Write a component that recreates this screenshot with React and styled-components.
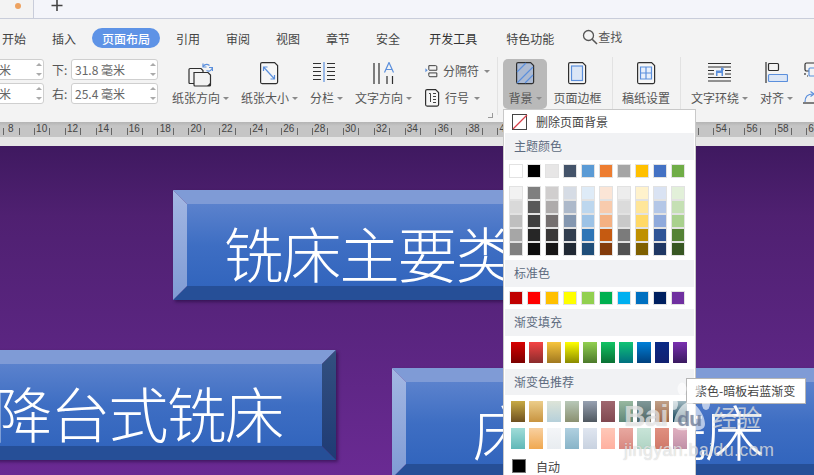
import React from 'react'
import styled, { createGlobalStyle } from 'styled-components'

const GlobalStyle = createGlobalStyle`
  html, body {
    margin: 0;
    padding: 0;
    overflow: hidden;
  }
  body {
    font-family: "Noto Sans CJK SC", "Liberation Sans", sans-serif;
  }
`

const Page = styled.div`
  position: relative;
  width: 814px;
  height: 475px;
  overflow: hidden;
  display: flex;
  flex-direction: column;
  background: #f3f3f3;
`

const TabStrip = styled.div`
  height: 18px;
  display: flex;
  flex: none;
  background: #f4f5fa;
  border-bottom: 1px solid #c9cdda;
`

const DocTab = styled.div`
  width: 34px;
  background: #f3f3f3;
  border-right: 1px solid #c9cdda;
  display: flex;
  justify-content: center;
  padding-left: 2px;
  box-sizing: border-box;
`

const Dot = styled.span`
  width: 6px;
  height: 6px;
  margin-top: 3px;
  border-radius: 50%;
  background: #eda260;
`

const AddTab = styled.div`
  width: 46px;
  display: flex;
  justify-content: center;
  color: #444;
`

const NavBar = styled.div`
  height: 20px;
  flex: none;
  margin: 9px 0 0 -8px;
  display: flex;
  gap: 6px;
  font-size: 12px;
  line-height: 20px;
  color: #444;
`

const NavItem = styled.div`
  height: 20px;
  box-sizing: border-box;
  padding: 1px 10px 0 ${p => (p.$wide ? 13 : 10)}px;
  border-radius: 10px;
  white-space: nowrap;
  color: ${p => (p.$active ? '#fff' : p.$dark ? '#333' : '#444')};
  background: ${p => (p.$active ? '#5e93e6' : 'transparent')};
  font-weight: ${p => (p.$active ? 500 : 400)};
`

const Search = styled.div`
  display: flex;
  align-items: center;
  margin-left: 12px;
  margin-top: -2px;
  color: #555;
`

const Ribbon = styled.div`
  height: 74px;
  flex: none;
  margin-left: -62px;
  position: relative;
  display: flex;
  align-items: flex-start;
`

const MarginColumn = styled.div`
  display: flex;
  flex-direction: column;
  gap: 3px;
  margin-top: 11px;
  margin-right: ${p => p.$gap}px;
`

const MarginRow = styled.div`
  display: flex;
  align-items: center;
  height: 21px;
  font-size: 12px;
  color: #555;
`

const MarginLabel = styled.span`
  width: 19px;
  white-space: nowrap;
`

const Spinner = styled.div`
  width: 87px;
  height: 21px;
  box-sizing: border-box;
  border: 1px solid #cfcfcf;
  border-radius: 3px;
  background: #fff;
  padding-left: 3px;
  display: flex;
  align-items: center;
  justify-content: space-between;
  font-size: 12px;
  color: #666;
  white-space: nowrap;
`

const Arrows = styled.span`
  display: flex;
  flex-direction: column;
  gap: 7px;
  margin-right: 1px;
`

const Arrow = styled.i`
  display: block;
  width: 0;
  height: 0;
  border-left: 3px solid transparent;
  border-right: 3px solid transparent;
  border-${p => (p.$down ? 'top' : 'bottom')}: 3px solid #aaa;
`

const BigButton = styled.div`
  width: ${p => p.$width}px;
  margin-right: ${p => p.$gap}px;
  margin-top: 11px;
  height: 50px;
  flex: none;
  border-radius: 5px;
  background: ${p => (p.$on ? '#b9b9b9' : 'transparent')};
  display: flex;
  flex-direction: column;
  align-items: center;
`

const IconSlot = styled.div`
  height: 30px;
  display: flex;
  align-items: flex-start;
  justify-content: center;
  padding-top: 3px;
  padding-right: ${p => p.$shift || 0}px;
  box-sizing: border-box;
  flex: none;
`

const ButtonLabel = styled.div`
  display: flex;
  align-items: center;
  gap: 3px;
  font-size: 12px;
  line-height: 18px;
  color: #555;
  white-space: nowrap;
`

const Caret = styled.i`
  width: 0;
  height: 0;
  margin-top: 1px;
  border-left: 3px solid transparent;
  border-right: 3px solid transparent;
  border-top: 3px solid #8a8a8a;
`

const SmallColumn = styled.div`
  width: ${p => p.$width}px;
  margin-top: 11px;
  flex: none;
  display: flex;
  flex-direction: column;
  gap: 5px;
`

const SmallButton = styled.div`
  height: 22px;
  display: flex;
  align-items: center;
  gap: 5px;
  padding-top: 1px;
  box-sizing: border-box;
  font-size: 12px;
  color: #555;
  white-space: nowrap;
`

const Divider = styled.div`
  width: 1px;
  height: 58px;
  flex: none;
  margin: 9px ${p => p.$after}px 0 ${p => p.$before || 0}px;
  background: #e2e2e2;
`

const CornerMark = styled.div`
  position: absolute;
  left: 550px;
  top: 65px;
  width: 4px;
  height: 4px;
  border-right: 1px solid #999;
  border-bottom: 1px solid #999;
`

const Ruler = styled.div`
  height: 15px;
  flex: none;
  padding-left: 3px;
  display: flex;
  overflow: hidden;
  background: linear-gradient(#b4b4b4 0, #c5c5c5 4px);
`

const RulerCell = styled.div`
  width: 30.9px;
  flex: none;
  height: 15px;
  font-family: "Liberation Sans", sans-serif;
  font-size: 10px;
  line-height: 15px;
  color: #444;
  background:
    linear-gradient(#666, #666) 0 6px / 1px 7px no-repeat,
    linear-gradient(#666, #666) 15.5px 6px / 1px 7px no-repeat;
`

const RulerNumber = styled.span`
  display: block;
  width: 15.5px;
  margin-top: -1px;
  text-align: center;
`

const Gutter = styled.div`
  height: 9px;
  flex: none;
  background: #e6e6e6;
`

const Stage = styled.div`
  flex: 1;
  position: relative;
  overflow: hidden;
  background: linear-gradient(#3f1960 0, #4f2071 70px, #5a2580 190px, #6a2a93 329px);
`

const SlideBox = styled.div`
  position: absolute;
  left: ${p => p.$x}px;
  top: ${p => p.$y}px;
  width: ${p => p.$w}px;
  height: 110px;
  box-sizing: border-box;
  border-style: solid;
  border-width: 14px;
  border-color: #7f9bd6 transparent #264f97 transparent;
  background: linear-gradient(#5b82cd 0, #3e6ec3 50%, #3265bd 100%) padding-box;
  box-shadow: 2px 2px 3px rgba(20, 0, 40, 0.45);
  display: flex;
  align-items: center;
  justify-content: center;
  padding: 14px 5px 0 0;
  color: #fff;
  font-size: 60px;
  font-weight: 300;
  letter-spacing: -2px;
  line-height: 60px;
  white-space: nowrap;

  &::before,
  &::after {
    content: '';
    position: absolute;
    top: -14px;
    bottom: -14px;
    width: 14px;
  }
  &::before {
    left: -14px;
    background: linear-gradient(#a3b7e3, #7f9bd4);
    clip-path: polygon(0 0, 100% 14px, 100% calc(100% - 14px), 0 100%);
  }
  &::after {
    right: -14px;
    background: linear-gradient(#33507f, #1f3b75);
    clip-path: polygon(100% 0, 0 14px, 0 calc(100% - 14px), 100% 100%);
  }
`

const Menu = styled.div`
  position: absolute;
  left: 503px;
  top: 109px;
  width: 193px;
  height: 380px;
  box-sizing: border-box;
  background: #fff;
  border: 1px solid #c9c9c9;
  display: flex;
  flex-direction: column;
  font-size: 12px;
  color: #444;
`

const ActionRow = styled.div`
  height: ${p => p.$h}px;
  flex: none;
  margin-top: ${p => p.$top || 0}px;
  display: flex;
  align-items: center;
  gap: ${p => p.$gap}px;
  padding-left: 8px;
`

const SectionTitle = styled.div`
  height: ${p => p.$h}px;
  flex: none;
  box-sizing: border-box;
  margin: ${p => p.$top}px 1px 0;
  padding: 0 0 2px 9px;
  background: #f1f2f4;
  display: flex;
  align-items: center;
  color: #5d6b80;
`

const SwatchRow = styled.div`
  display: flex;
  gap: 4px;
  flex: none;
  margin-top: ${p => p.$top}px;
  padding-left: ${p => p.$left}px;
`

const Swatch = styled.div`
  width: 14px;
  height: 14px;
  box-sizing: border-box;
  border: 1px solid #e2e2e2;
  background: ${p => p.$color};
`

const ShadeColumn = styled.div`
  display: flex;
  flex-direction: column;
`

const GradientSwatch = styled.div`
  width: 14px;
  height: 21px;
  background: linear-gradient(${p => p.$from}, ${p => p.$to});
`

const AutoSquare = styled.div`
  width: 14px;
  height: 14px;
  box-sizing: border-box;
  background: #000;
  border: 1px solid #777;
`

const Tooltip = styled.div`
  position: absolute;
  left: 686px;
  top: 378px;
  width: 120px;
  height: 26px;
  box-sizing: border-box;
  background: #fff;
  border: 1px solid #b5b5b5;
  padding-left: 8px;
  font-size: 12px;
  line-height: 24px;
  color: #444;
  white-space: nowrap;
`

const Watermark = styled.div`
  position: absolute;
  left: 624px;
  top: 382px;
  width: 150px;
  color: rgba(255, 255, 255, 0.62);
  font-family: "Liberation Sans", sans-serif;
  text-shadow: 0 0 1px rgba(120, 120, 120, 0.45);
  pointer-events: none;
`

const MarkTop = styled.div`
  display: flex;
  align-items: flex-end;
  height: 50px;
  font-size: 30px;
  line-height: 32px;
  font-weight: 700;
  letter-spacing: -1px;
`

const PawWrap = styled.div`
  position: relative;
  width: 43px;
  height: 50px;
  flex: none;
  display: flex;
  align-items: flex-end;
  justify-content: center;
  font-size: 21px;
  line-height: 26px;
  color: rgba(90, 110, 150, 0.55);
`

const PawShape = styled.svg`
  position: absolute;
  left: 0;
  top: 0;
`

const PawText = styled.span`
  position: relative;
`

const MarkCn = styled.span`
  font-family: "Noto Sans CJK SC", sans-serif;
  font-size: 24px;
  line-height: 30px;
  font-weight: 400;
  margin-left: 2px;
  letter-spacing: 0;
`

const MarkUrl = styled.div`
  margin-top: 8px;
  font-size: 18px;
  line-height: 20px;
  letter-spacing: 0.3px;
  white-space: nowrap;
`

const Dark = '#2f2f2f'
const Blue = '#5b8fdc'

const Icon = ({ w = 24, h = 24, children }) => (
  <svg width={w} height={h} viewBox={`0 0 ${w} ${h}`} fill="none" strokeWidth="1.2">
    {children}
  </svg>
)

const Doc = ({ x = 0.6, y = 0.6, w = 17, h = 21, fill = '#fff' }) => (
  <path
    d={`M${x + 1.5} ${y}H${x + w - 3}L${x + w} ${y + 3}V${y + h - 1.5}Q${x + w} ${y + h} ${x + w - 1.5} ${y + h}H${x + 1.5}Q${x} ${y + h} ${x} ${y + h - 1.5}V${y + 1.5}Q${x} ${y} ${x + 1.5} ${y}Z`}
    stroke={Dark}
    fill={fill}
  />
)

const OrientationIcon = () => (
  <Icon w={25} h={25}>
    <path d="M3 3.500H13L15 5.500V18.500H2Q1 18.500 1 17.500V4.500Q1 3.500 2 3.500Z" stroke={Dark} fill="#f3f3f3" transform="translate(0 3)" />
    <path d="M6 10.500H20L22.500 13V23Q22.500 24 21.500 24H7Q6 24 6 23Z" stroke={Dark} fill="#f3f3f3" />
    <path d="M22.500 20.500V24H19Z" fill={Dark} />
    <path d="M15 4.500Q18 0.800 21.500 3.500M24 6.500Q22 10.500 18.500 8.500" stroke={Blue} />
    <path d="M15 1.500V5H18.500M24.500 9V5.500H21" stroke={Blue} />
  </Icon>
)

const SizeIcon = () => (
  <Icon w={19} h={23}>
    <Doc fill="#f6f6f6" />
    <path d="M3.500 5L14.500 17M3.500 9V5H7.500M14.500 13V17H10.500" stroke={Blue} />
  </Icon>
)

const ColumnsIcon = () => (
  <Icon w={24} h={20}>
    <path d="M1 1.500H9M1 5.500H9M1 9.500H9M1 13.500H9M1 17.500H9M15 1.500H23M15 5.500H23M15 9.500H23M15 13.500H23M15 17.500H23" stroke={Dark} strokeWidth="1" />
    <path d="M12 0V20" stroke={Blue} />
  </Icon>
)

const TextDirIcon = () => (
  <Icon w={22} h={23}>
    <path d="M1 1V22M6 1V22M14 14V22M19.500 14V22" stroke={Dark} />
    <path d="M11.500 10.500L16 0.500L20.500 10.500M13 7.500H19" stroke={Blue} />
  </Icon>
)

const BreakIcon = () => (
  <Icon w={17} h={18}>
    <path d="M5 2H14Q15.500 2 15.500 3.500V8H5.500Q5 8 5 7ZM5 11.500H15.500V16.500H6.500Q5 16.500 5 15Z" stroke={Dark} />
    <path d="M0.500 5.500L3.500 8L0.500 10.500Z" fill={Blue} />
  </Icon>
)

const LineNumberIcon = () => (
  <Icon w={15} h={18}>
    <Doc w={13} h={16.5} fill="#f6f6f6" />
    <path d="M4 4.500H5.500V13M8 4.500H11M8 7.500H11M8 10.500H11M8 13.500H11" stroke={Dark} strokeWidth="0.9" />
  </Icon>
)

const BackgroundIcon = () => (
  <Icon w={19} h={23}>
    <Doc fill="#acbad2" />
    <path d="M1 10L10 1M1 21L17 5M9 21L17 13" stroke="#5b8fdc" strokeWidth="1.1" />
  </Icon>
)

const BorderIcon = () => (
  <Icon w={19} h={23}>
    <Doc fill="#f6f6f6" />
    <rect x="3.500" y="4" width="11" height="14.500" fill="#dbe6f6" stroke={Blue} />
  </Icon>
)

const GridPaperIcon = () => (
  <Icon w={19} h={23}>
    <Doc fill="#f6f6f6" />
    <path d="M3.500 5H14.500V17H3.500ZM3.500 11H14.500M9 5V17" stroke={Blue} fill="#e8effa" />
  </Icon>
)

const WrapIcon = () => (
  <Icon w={23} h={20}>
    <path d="M0 1.500H23M0 5H23M0 8.500H6M17 8.500H23M0 12H6M17 12H23M0 15.500H23M0 19H23" stroke={Dark} strokeWidth="1" />
    <path d="M8 14V8.500H13V5.500H15L16 7.500L15 8.500V14H13.500V11H9.500V14Z" fill={Blue} />
  </Icon>
)

const AlignIcon = () => (
  <Icon w={23} h={21}>
    <path d="M1 0V21" stroke={Dark} />
    <rect x="3.500" y="1.500" width="10" height="7" rx="1" stroke={Dark} />
    <rect x="3.500" y="12.500" width="19" height="7" rx="1" stroke={Blue} fill="#dbe6f6" />
  </Icon>
)

const GroupIcon = () => (
  <Icon w={20} h={18}>
    <rect x="2" y="1" width="13" height="8" rx="1.500" stroke={Dark} />
    <rect x="6" y="6" width="13" height="8" rx="1" stroke={Blue} fill="#f3f3f3" />
    <path d="M2 11V13M4 14H5" stroke={Dark} />
  </Icon>
)

const RotateIcon = () => (
  <Icon w={14} h={14}>
    <path d="M2 11Q2 3 10 3" stroke={Blue} />
    <path d="M7.500 0.500L11 3L7.500 5.500" stroke={Blue} />
    <path d="M0 12H12" stroke={Dark} />
  </Icon>
)

const NoFillIcon = () => (
  <svg width="16" height="16" viewBox="0 0 16 16" fill="none">
    <rect x=".5" y=".5" width="14" height="15" stroke="#444" />
    <path d="M1 15L15 1" stroke="#d8404a" strokeWidth="1.2" />
  </svg>
)

const SearchIcon = () => (
  <svg width="16" height="16" viewBox="0 0 16 16" fill="none" stroke="#555" strokeWidth="1.3">
    <circle cx="6.500" cy="6.500" r="5" />
    <path d="M10.200 10.200L15 15" strokeWidth="1.6" />
  </svg>
)

const PawIcon = () => (
  <PawShape width="43" height="50" viewBox="0 0 43 50" fill="rgba(255,255,255,.62)">
    <ellipse cx="6" cy="22" rx="4" ry="6" />
    <ellipse cx="14" cy="7" rx="4.500" ry="6.500" />
    <ellipse cx="29" cy="7" rx="4.500" ry="6.500" />
    <ellipse cx="38" cy="22" rx="4" ry="6" />
    <path d="M21 20C15 20 6 32 6 42C6 50 16 48 21 48C26 48 37 50 37 42C37 32 27 20 21 20Z" />
  </PawShape>
)

const navItems = ['开始', '插入', '页面布局', '引用', '审阅', '视图', '章节', '安全']

const themeColors = ['#ffffff', '#000000', '#e7e6e6', '#44546a', '#5b9bd5', '#ed7d31', '#a5a5a5', '#ffc000', '#4472c4', '#70ad47']

const shades = [
  ['#f2f2f2', '#d9d9d9', '#bfbfbf', '#a6a6a6', '#808080'],
  ['#7f7f7f', '#595959', '#3f3f3f', '#262626', '#0d0d0d'],
  ['#d0cece', '#aeabab', '#757070', '#3a3838', '#171616'],
  ['#d6dce5', '#adb9ca', '#8497b0', '#333f50', '#222a35'],
  ['#deebf7', '#bdd7ee', '#9dc3e6', '#2e75b6', '#1f4e79'],
  ['#fbe5d6', '#f8cbad', '#f4b183', '#c55a11', '#843c0c'],
  ['#ededed', '#dbdbdb', '#c9c9c9', '#7b7b7b', '#525252'],
  ['#fff2cc', '#ffe699', '#ffd966', '#bf9000', '#7f6000'],
  ['#dae3f3', '#b4c7e7', '#8faadc', '#2f5597', '#203864'],
  ['#e2f0d9', '#c5e0b4', '#a9d18e', '#548235', '#385723'],
]

const standardColors = ['#c00000', '#ff0000', '#ffc000', '#ffff00', '#92d050', '#00b050', '#00b0f0', '#0070c0', '#002060', '#7030a0']

const gradientFills = [
  ['#d80000', '#7a0000'], ['#f54444', '#8a2c2c'], ['#f7c53c', '#a07820'], ['#ffff00', '#8a8a00'], ['#92d050', '#4c7a2a'],
  ['#10c464', '#0a7034'], ['#10c474', '#007080'], ['#0080d8', '#00407e'], ['#0a2a86', '#122070'], ['#7a30b0', '#3a1a60'],
]

const recommendedA = [
  ['#c8aa44', '#6e5020'], ['#eccd8a', '#c89440'], ['#dde4d8', '#b6d0da'], ['#b8c8b8', '#8a9070'], ['#98a2b2', '#505860'],
  ['#a06870', '#804850'], ['#98b8a0', '#608878'], ['#809898', '#506868'], ['#c0a088', '#a06848'], ['#a0b8c0', '#0a3a50'],
]

const recommendedB = [
  ['#a0dcd8', '#60b8b8'], ['#f8d0a0', '#f0a850'], ['#f4f6f8', '#e8ecf0'], ['#b0d0e0', '#88b4c8'], ['#e0e6f0', '#c8d2e0'],
  ['#ffc8b8', '#ffb0a0'], ['#e8a8a0', '#d88880'], ['#c8e4d8', '#b0d4c4'], ['#e09080', '#d07868'], ['#e0b0c0', '#c090a8'],
]

const rulerNumbers = Array.from({ length: 27 }, (_, i) => 8 + i * 2)

const App = () => (
  <Page>
    <GlobalStyle />

    <TabStrip>
      <DocTab><Dot /></DocTab>
      <AddTab>
        <svg width="12" height="12" viewBox="0 0 12 12" stroke="#444" strokeWidth="1.6">
          <path d="M6 0V11M0.500 5.500H11.500" />
        </svg>
      </AddTab>
    </TabStrip>

    <NavBar>
      {navItems.map(name => (
        <NavItem key={name} $active={name === '页面布局'}>{name}</NavItem>
      ))}
      <NavItem $wide $dark>开发工具</NavItem>
      <NavItem $wide>特色功能</NavItem>
      <Search><SearchIcon />查找</Search>
    </NavBar>

    <Ribbon>
      <MarginColumn $gap={8}>
        <MarginRow>
          <MarginLabel>上:</MarginLabel>
          <Spinner>25.4 毫米<Arrows><Arrow /><Arrow $down /></Arrows></Spinner>
        </MarginRow>
        <MarginRow>
          <MarginLabel>左:</MarginLabel>
          <Spinner>31.8 毫米<Arrows><Arrow /><Arrow $down /></Arrows></Spinner>
        </MarginRow>
      </MarginColumn>
      <MarginColumn $gap={14}>
        <MarginRow>
          <MarginLabel>下:</MarginLabel>
          <Spinner>31.8 毫米<Arrows><Arrow /><Arrow $down /></Arrows></Spinner>
        </MarginRow>
        <MarginRow>
          <MarginLabel>右:</MarginLabel>
          <Spinner>25.4 毫米<Arrows><Arrow /><Arrow $down /></Arrows></Spinner>
        </MarginRow>
      </MarginColumn>

      <BigButton $width={57} $gap={12}>
        <IconSlot><OrientationIcon /></IconSlot>
        <ButtonLabel>纸张方向<Caret /></ButtonLabel>
      </BigButton>
      <BigButton $width={57} $gap={12}>
        <IconSlot><SizeIcon /></IconSlot>
        <ButtonLabel>纸张大小<Caret /></ButtonLabel>
      </BigButton>
      <BigButton $width={33} $gap={12}>
        <IconSlot $shift={5}><ColumnsIcon /></IconSlot>
        <ButtonLabel>分栏<Caret /></ButtonLabel>
      </BigButton>
      <BigButton $width={57} $gap={13}>
        <IconSlot><TextDirIcon /></IconSlot>
        <ButtonLabel>文字方向<Caret /></ButtonLabel>
      </BigButton>
      <SmallColumn $width={65}>
        <SmallButton><BreakIcon />分隔符<Caret /></SmallButton>
        <SmallButton><LineNumberIcon />行号<Caret /></SmallButton>
      </SmallColumn>
      <CornerMark />
      <Divider $before={7} $after={5} />

      <BigButton $width={44} $gap={6} $on>
        <IconSlot><BackgroundIcon /></IconSlot>
        <ButtonLabel>背景<Caret /></ButtonLabel>
      </BigButton>
      <BigButton $width={49} $gap={10}>
        <IconSlot><BorderIcon /></IconSlot>
        <ButtonLabel>页面边框</ButtonLabel>
      </BigButton>
      <Divider $after={9} />
      <BigButton $width={48} $gap={10}>
        <IconSlot><GridPaperIcon /></IconSlot>
        <ButtonLabel>稿纸设置</ButtonLabel>
      </BigButton>
      <Divider $after={10} />
      <BigButton $width={57} $gap={12}>
        <IconSlot><WrapIcon /></IconSlot>
        <ButtonLabel>文字环绕<Caret /></ButtonLabel>
      </BigButton>
      <BigButton $width={33} $gap={10}>
        <IconSlot><AlignIcon /></IconSlot>
        <ButtonLabel>对齐<Caret /></ButtonLabel>
      </BigButton>
      <SmallColumn $width={20}>
        <SmallButton><GroupIcon /></SmallButton>
        <SmallButton><RotateIcon /></SmallButton>
      </SmallColumn>
    </Ribbon>

    <Ruler>
      {rulerNumbers.map(n => (
        <RulerCell key={n}><RulerNumber>{n}</RulerNumber></RulerCell>
      ))}
    </Ruler>
    <Gutter />

    <Stage>
      <SlideBox $x={173} $y={44} $w={454}>铣床主要类型</SlideBox>
      <SlideBox $x={-114} $y={204} $w={450}>升降台式铣床</SlideBox>
      <SlideBox $x={392} $y={222} $w={456}>床身式铣床</SlideBox>
    </Stage>

    <Menu>
      <ActionRow $h={23} $gap={8}><NoFillIcon />删除页面背景</ActionRow>
      <SectionTitle $h={27} $top={0}>主题颜色</SectionTitle>
      <SwatchRow $top={4} $left={5}>
        {themeColors.map(c => <Swatch key={c} $color={c} />)}
      </SwatchRow>
      <SwatchRow $top={8} $left={5}>
        {shades.map(col => (
          <ShadeColumn key={col[0]}>
            {col.map(c => <Swatch key={c} $color={c} />)}
          </ShadeColumn>
        ))}
      </SwatchRow>
      <SectionTitle $h={27} $top={4}>标准色</SectionTitle>
      <SwatchRow $top={4} $left={5}>
        {standardColors.map(c => <Swatch key={c} $color={c} />)}
      </SwatchRow>
      <SectionTitle $h={27} $top={4}>渐变填充</SectionTitle>
      <SwatchRow $top={6} $left={7}>
        {gradientFills.map(([a, b]) => <GradientSwatch key={a + b} $from={a} $to={b} />)}
      </SwatchRow>
      <SectionTitle $h={26} $top={6}>渐变色推荐</SectionTitle>
      <SwatchRow $top={6} $left={7}>
        {recommendedA.map(([a, b]) => <GradientSwatch key={a + b} $from={a} $to={b} />)}
      </SwatchRow>
      <SwatchRow $top={6} $left={7}>
        {recommendedB.map(([a, b]) => <GradientSwatch key={a + b} $from={a} $to={b} />)}
      </SwatchRow>
      <ActionRow $h={28} $top={3} $gap={10}><AutoSquare />自动</ActionRow>
    </Menu>

    <Tooltip>紫色-暗板岩蓝渐变</Tooltip>

    <Watermark>
      <MarkTop>
        Bai
        <PawWrap><PawIcon /><PawText>du</PawText></PawWrap>
        <MarkCn>经验</MarkCn>
      </MarkTop>
      <MarkUrl>jingyan.baidu.com</MarkUrl>
    </Watermark>
  </Page>
)

export default App
